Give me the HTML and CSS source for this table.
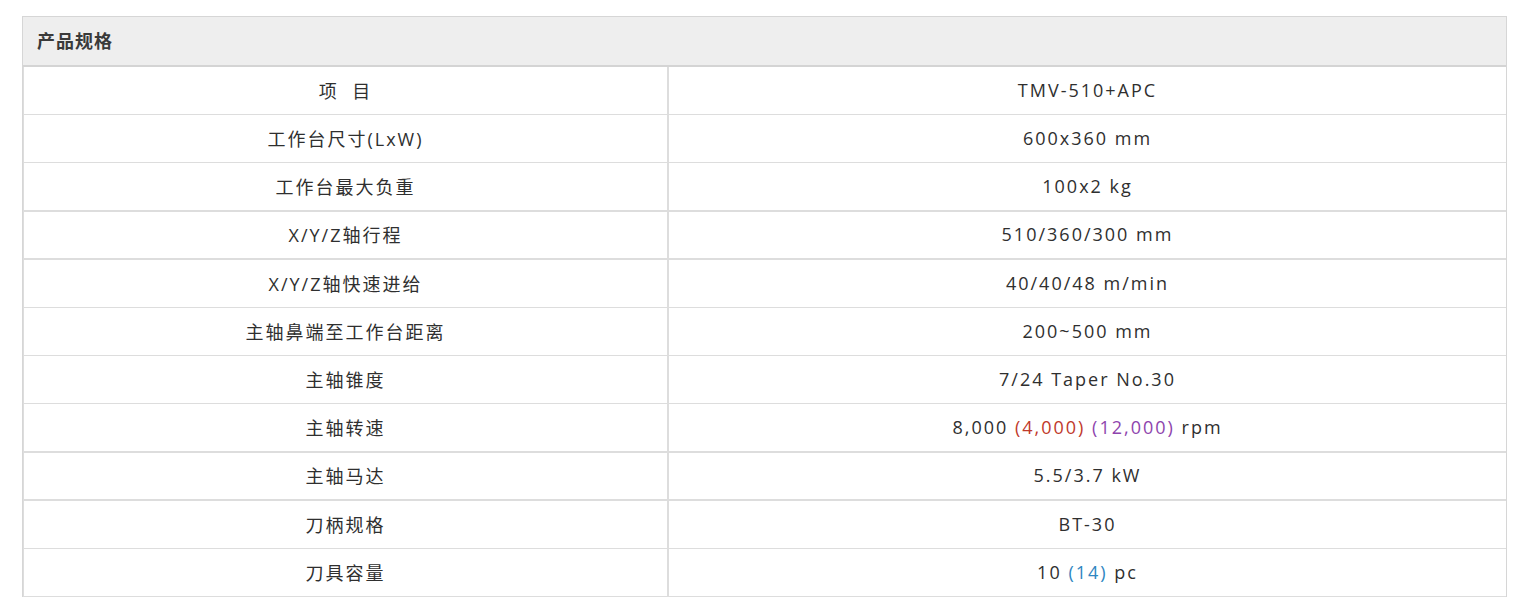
FILE: index.html
```html
<!DOCTYPE html>
<html lang="zh-CN">
<head>
<meta charset="utf-8">
<title>产品规格</title>
<link rel="stylesheet" href="styles.css">
</head>
<body>
<div class="panel">
  <div class="panel-head">产品规格</div>
  <div class="spec">
    <div class="row"><div class="cell key"><span>项&nbsp;&nbsp;目</span></div><div class="cell val"><span>TMV-510+APC</span></div></div>
    <div class="row"><div class="cell key"><span>工作台尺寸(LxW)</span></div><div class="cell val"><span>600x360 mm</span></div></div>
    <div class="row thick"><div class="cell key"><span>工作台最大负重</span></div><div class="cell val"><span>100x2 kg</span></div></div>
    <div class="row thick tight"><div class="cell key"><span>X/Y/Z轴行程</span></div><div class="cell val"><span>510/360/300 mm</span></div></div>
    <div class="row"><div class="cell key"><span>X/Y/Z轴快速进给</span></div><div class="cell val"><span>40/40/48 m/min</span></div></div>
    <div class="row"><div class="cell key"><span>主轴鼻端至工作台距离</span></div><div class="cell val"><span>200~500 mm</span></div></div>
    <div class="row"><div class="cell key"><span>主轴锥度</span></div><div class="cell val"><span>7/24 Taper No.30</span></div></div>
    <div class="row thick"><div class="cell key"><span>主轴转速</span></div><div class="cell val"><span>8,000 <span class="red">(4,000)</span> <span class="purple">(12,000)</span> rpm</span></div></div>
    <div class="row thick tight"><div class="cell key"><span>主轴马达</span></div><div class="cell val"><span>5.5/3.7 kW</span></div></div>
    <div class="row"><div class="cell key"><span>刀柄规格</span></div><div class="cell val"><span>BT-30</span></div></div>
    <div class="row"><div class="cell key"><span>刀具容量</span></div><div class="cell val"><span>10 <span class="blue">(14)</span> pc</span></div></div>
  </div>
</div>
</body>
</html>
```

FILE: styles.css
```css
html, body {
  margin: 0;
  padding: 0;
  background: #ffffff;
}

body {
  font-family: "Open Sans", "Noto Sans CJK SC", sans-serif;
  color: #333333;
}

.panel {
  margin: 16px 20px 0 22px;
  border: 1px solid #d6d6d6;
  border-bottom: none;
}

.panel-head {
  height: 48px;
  line-height: 47px;
  padding-left: 14px;
  background: #eeeeee;
  border-bottom: 2px solid #d4d4d4;
  font-family: "Noto Sans CJK SC", sans-serif;
  font-weight: 700;
  font-size: 18px;
  letter-spacing: 1px;
  color: #3a3a3a;
}

.spec {
  border-left: 1px solid #dddddd;
}

.row {
  display: grid;
  grid-template-columns: 645px 1fr;
  height: 47px;
  border-bottom: 1px solid #dddddd;
}

.row.thick {
  border-bottom-width: 2px;
}

.row.tight {
  height: 46px;
}

.cell {
  display: flex;
  align-items: center;
  justify-content: center;
  padding-bottom: 2px;
  box-sizing: border-box;
  font-size: 18px;
  letter-spacing: 2px;
  white-space: pre;
  color: #2f2f2f;
}

.key {
  border-right: 2px solid #dddddd;
}

.red { color: #c0392b; }
.purple { color: #8e44ad; }
.blue { color: #2e86c1; }
```
